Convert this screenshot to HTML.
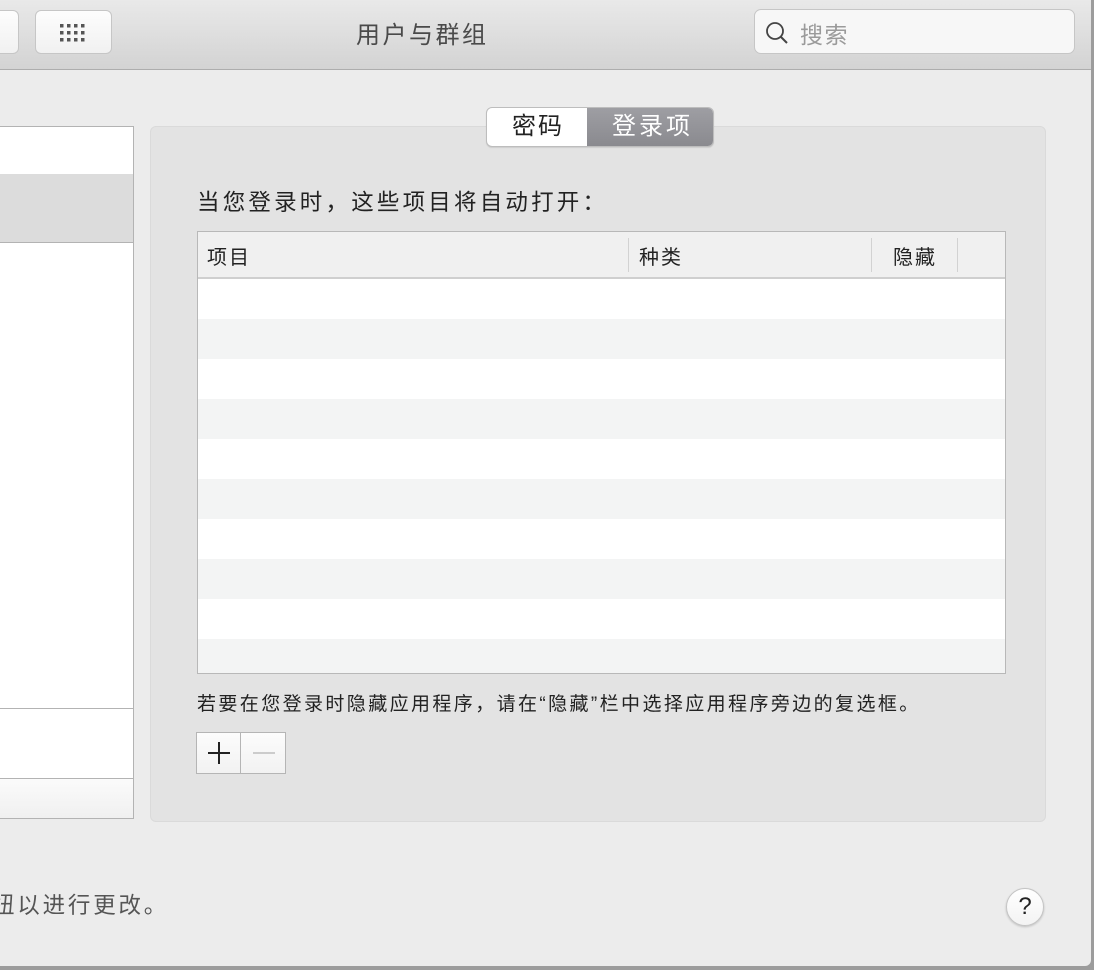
<!DOCTYPE html>
<html><head><meta charset="utf-8"><style>
*{margin:0;padding:0;box-sizing:border-box}
body{width:1094px;height:970px;background:#9c9c9c;position:relative;overflow:hidden;font-family:"Liberation Sans","Noto Sans CJK SC",sans-serif;color:#222}
.win{position:absolute;left:0;top:0;width:1091px;height:966px;background:#ececec;border-bottom-right-radius:6px;overflow:hidden}
.tb{position:absolute;left:0;top:0;width:100%;height:70px;background:linear-gradient(#e9e9e9,#d3d3d3);border-bottom:1px solid #adadad}
.btn{position:absolute;background:linear-gradient(#fdfdfd,#f1f1f1);border:1px solid #c6c6c6;border-radius:6px}
.abs{position:absolute;white-space:nowrap}
</style></head><body>
<div class="win">
 <div class="tb">
  <div class="btn" style="left:-10px;top:10px;width:29px;height:44px"></div>
  <div class="btn" style="left:35px;top:10px;width:77px;height:44px">
   <svg class="abs" style="left:23px;top:12px" width="32" height="20"><g fill="#555">
    <rect x="1" y="1" width="3.5" height="3.5"/><rect x="8" y="1" width="3.5" height="3.5"/><rect x="15" y="1" width="3.5" height="3.5"/><rect x="22" y="1" width="3.5" height="3.5"/>
    <rect x="1" y="8" width="3.5" height="3.5"/><rect x="8" y="8" width="3.5" height="3.5"/><rect x="15" y="8" width="3.5" height="3.5"/><rect x="22" y="8" width="3.5" height="3.5"/>
    <rect x="1" y="15" width="3.5" height="3.5"/><rect x="8" y="15" width="3.5" height="3.5"/><rect x="15" y="15" width="3.5" height="3.5"/><rect x="22" y="15" width="3.5" height="3.5"/></g></svg>
  </div>
  <div class="abs" style="left:356px;top:15px;font-size:24px;letter-spacing:2.5px;color:#4a4a4a">用户与群组</div>
  <div class="btn" style="left:754px;top:9px;width:321px;height:45px;border-radius:7px;background:#f7f7f7">
   <svg class="abs" style="left:10px;top:11px" width="26" height="26"><circle cx="10" cy="10" r="8" fill="none" stroke="#444" stroke-width="1.8"/><line x1="16" y1="16" x2="22" y2="22" stroke="#444" stroke-width="2"/></svg>
   <div class="abs" style="left:45px;top:6px;font-size:23px;letter-spacing:1.5px;color:#9a9a9a">搜索</div>
  </div>
 </div>

 <div class="abs" style="left:-2px;top:126px;width:136px;height:693px;background:#fff;border:1px solid #b3b3b3">
  <div class="abs" style="left:0;top:47px;width:100%;height:69px;background:#dcdcdc;border-bottom:1px solid #b3b3b3"></div>
  <div class="abs" style="left:0;top:581px;width:100%;border-top:1px solid #b3b3b3"></div>
  <div class="abs" style="left:0;top:651px;width:100%;height:40px;background:linear-gradient(#fbfbfb,#f0f0f0);border-top:1px solid #b3b3b3"></div>
 </div>

 <div class="abs" style="left:150px;top:126px;width:896px;height:696px;background:#e3e3e3;border:1px solid #dadada;border-radius:6px"></div>
 <div class="abs" style="left:486px;top:107px;width:228px;height:40px;border:1px solid #bdbdbd;border-radius:6px;overflow:hidden;background:#fff;box-shadow:0 1px 1px rgba(0,0,0,.1)">
  <div class="abs" style="left:0;top:0;width:100px;height:38px;text-align:center;font-size:24px;letter-spacing:2px;text-indent:2px;line-height:38px;color:#222">密码</div>
  <div class="abs" style="left:100px;top:0;width:128px;height:38px;background:linear-gradient(#9e9ea3,#8a8a8f);text-align:center;font-size:24px;letter-spacing:3px;text-indent:3px;line-height:38px;color:#fff">登录项</div>
 </div>
 <div class="abs" style="left:197px;top:185px;font-size:22.5px;letter-spacing:3.2px;color:#222">当您登录时，这些项目将自动打开：</div>

 <div class="abs" style="left:197px;top:231px;width:809px;height:443px;border:1px solid #b8b8b8;background:repeating-linear-gradient(#fff 0 40px,#f3f4f4 40px 80px) 0 47px/100% 100% no-repeat,#fff">
  <div class="abs" style="left:0;top:0;width:100%;height:47px;background:#f0f0f0;border-bottom:2px solid #cfcfcf"></div>
  <div class="abs" style="left:430px;top:6px;height:34px;border-left:1px solid #d2d2d2"></div>
  <div class="abs" style="left:673px;top:6px;height:34px;border-left:1px solid #d2d2d2"></div>
  <div class="abs" style="left:759px;top:6px;height:34px;border-left:1px solid #d2d2d2"></div>
  <div class="abs" style="left:9px;top:9px;font-size:20px;letter-spacing:2px">项目</div>
  <div class="abs" style="left:441px;top:9px;font-size:20px;letter-spacing:2px">种类</div>
  <div class="abs" style="left:695px;top:9px;font-size:20px;letter-spacing:2px">隐藏</div>
 </div>
 <div class="abs" style="left:197px;top:689px;font-size:19px;letter-spacing:2.4px;color:#222">若要在您登录时隐藏应用程序，请在“隐藏”栏中选择应用程序旁边的复选框。</div>
 <div class="abs" style="left:196px;top:732px;width:90px;height:42px;border:1px solid #b5b5b5;background:linear-gradient(#fcfcfc,#f2f2f2)">
  <div class="abs" style="left:43px;top:0;height:40px;border-left:1px solid #b5b5b5"></div>
  <div class="abs" style="left:11px;top:19px;width:22px;height:1.5px;background:#222"></div>
  <div class="abs" style="left:21px;top:9px;width:1.5px;height:22px;background:#222"></div>
  <div class="abs" style="left:56px;top:19px;width:22px;height:1.5px;background:#ccc"></div>
 </div>

 <div class="abs" style="left:-8px;top:888px;font-size:22.5px;letter-spacing:2.8px;color:#555">扭以进行更改。</div>
 <div class="abs" style="left:1006px;top:888px;width:38px;height:38px;border-radius:50%;background:linear-gradient(#fff,#f3f3f3);border:1px solid #c4c4c4;box-shadow:0 1px 2px rgba(0,0,0,.2);text-align:center;font-size:24px;line-height:36px;color:#222">?</div>
</div>
</body></html>
